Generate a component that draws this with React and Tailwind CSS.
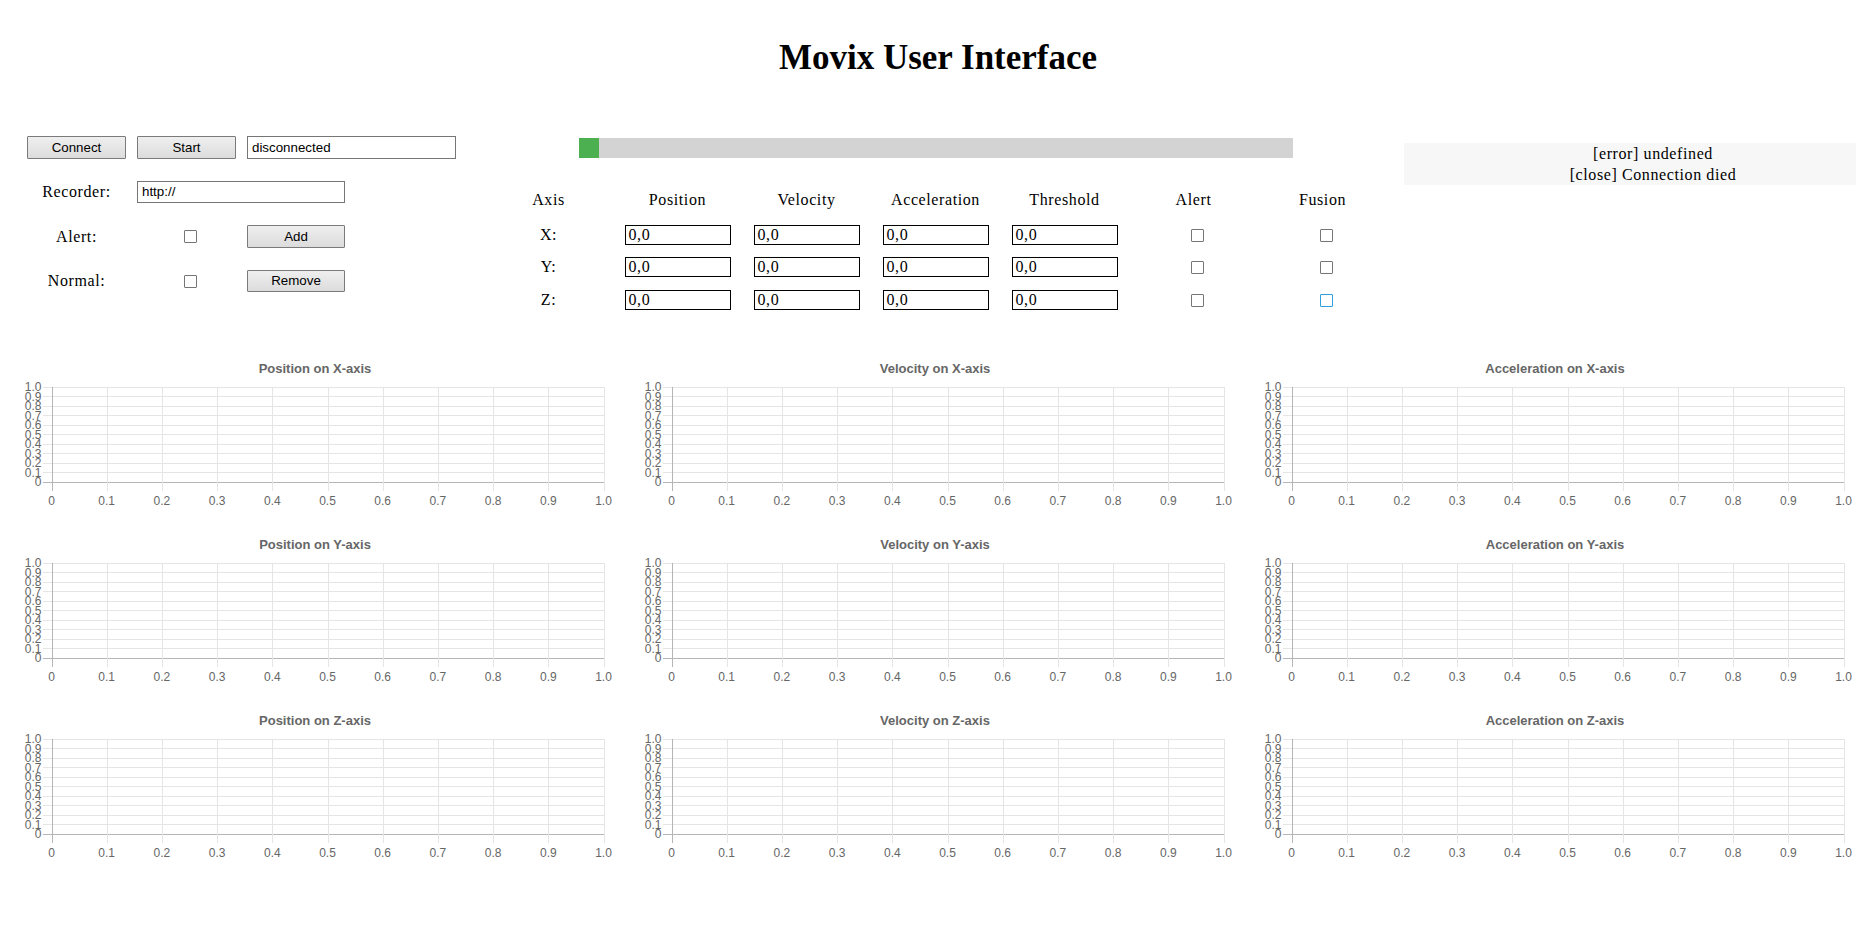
import React from "react";

const sans = "font-['Liberation_Sans',Arial,sans-serif]";

function Btn({ children, w }) {
  return (
    <button
      className={`${sans} ${w} h-full text-[13.33px] tracking-normal text-black border border-[#7a7a7a] rounded-[1px] bg-gradient-to-b from-[#efefef] to-[#dcdcdc] flex items-center justify-center leading-none`}
    >
      {children}
    </button>
  );
}

function Check({ blue }) {
  return (
    <div
      className={`w-[13px] h-[13px] rounded-[1px] bg-white border ${
        blue ? "border-[#2f9fe0]" : "border-[#767676]"
      }`}
    />
  );
}

function NumInput() {
  return (
    <div className="w-[106px] h-[20px] border border-black bg-white flex items-center pl-[3px] text-[16px] leading-none">
      0,0
    </div>
  );
}

function Chart({ title }) {
  const W = 620;
  const L = 43.5;
  const R = 595.5;
  const T = 34.5;
  const B = 129.5;
  const step = (B - T) / 10;
  const xs = Array.from({ length: 11 }, (_, i) => L + (i * (R - L)) / 10);
  const ys = Array.from({ length: 11 }, (_, j) => B - j * step);
  const xl = ["0", "0.1", "0.2", "0.3", "0.4", "0.5", "0.6", "0.7", "0.8", "0.9", "1.0"];
  return (
    <svg width={W} height={176} className="block">
      <text
        x={W / 2 - 3}
        y={20.5}
        textAnchor="middle"
        fontFamily="Liberation Sans, Arial, sans-serif"
        fontSize="13"
        fontWeight="bold"
        fill="#666"
      >
        {title}
      </text>
      <g shapeRendering="crispEdges">
        {ys.map((y, j) => (
          <line
            key={"h" + j}
            x1={L - 9}
            x2={R}
            y1={Math.round(y) + 0.5}
            y2={Math.round(y) + 0.5}
            stroke={j === 0 ? "#b5b5b5" : "#e5e5e5"}
            strokeWidth="1"
          />
        ))}
        {xs.map((x, i) => (
          <line
            key={"v" + i}
            x1={Math.round(x) + 0.5}
            x2={Math.round(x) + 0.5}
            y1={T}
            y2={B + 9}
            stroke={i === 0 ? "#b5b5b5" : "#e5e5e5"}
            strokeWidth="1"
          />
        ))}
      </g>
      {ys.map((y, j) => (
        <text
          key={"yl" + j}
          x={L - 10}
          y={y + 4.5}
          textAnchor="end"
          fontFamily="Liberation Sans, Arial, sans-serif"
          fontSize="12"
          fill="#666"
        >
          {j === 0 ? "0" : j === 10 ? "1.0" : "0." + j}
        </text>
      ))}
      {xs.map((x, i) => (
        <text
          key={"xl" + i}
          x={x}
          y={B + 23}
          textAnchor="middle"
          fontFamily="Liberation Sans, Arial, sans-serif"
          fontSize="12"
          fill="#666"
        >
          {xl[i]}
        </text>
      ))}
    </svg>
  );
}

export default function App() {
  const headers = ["Axis", "Position", "Velocity", "Acceleration", "Threshold", "Alert", "Fusion"];
  const rows = ["X:", "Y:", "Z:"];
  const charts = [
    ["Position on X-axis", "Velocity on X-axis", "Acceleration on X-axis"],
    ["Position on Y-axis", "Velocity on Y-axis", "Acceleration on Y-axis"],
    ["Position on Z-axis", "Velocity on Z-axis", "Acceleration on Z-axis"],
  ];
  return (
    <div className="min-h-screen w-full bg-white text-black font-['Liberation_Serif','Times_New_Roman',serif] text-[16px]">
      <h1 className="pt-[38px] text-center text-[35px] font-bold leading-[40px] m-0">
        Movix User Interface
      </h1>

      <div className="mt-[58px] h-[216px] flex items-start tracking-[0.6px]">
        {/* Left controls */}
        <div className="ml-[27px] w-[429px] flex flex-col">
          <div className="h-[23px] flex gap-[11px]">
            <Btn w="w-[99px]">Connect</Btn>
            <Btn w="w-[99px]">Start</Btn>
            <div
              className={`${sans} tracking-normal w-[209px] h-[23px] border border-[#767676] bg-white flex items-center pl-[4px] text-[13.33px]`}
            >
              disconnected
            </div>
          </div>
          <div className="mt-[22px] h-[22px] flex items-center">
            <div className="w-[99px] text-center">Recorder:</div>
            <div
              className={`${sans} tracking-normal ml-[11px] w-[208px] h-[22px] border border-[#767676] bg-white flex items-center pl-[4px] text-[13.33px]`}
            >
              http://
            </div>
          </div>
          <div className="mt-[22px] h-[23px] flex items-center">
            <div className="w-[99px] text-center">Alert:</div>
            <div className="ml-[11px] w-[99px] flex pl-[47px]">
              <Check />
            </div>
            <div className="ml-[11px] h-full">
              <Btn w="w-[98px]">Add</Btn>
            </div>
          </div>
          <div className="mt-[22px] h-[22px] flex items-center">
            <div className="w-[99px] text-center">Normal:</div>
            <div className="ml-[11px] w-[99px] flex pl-[47px]">
              <Check />
            </div>
            <div className="ml-[11px] h-full">
              <Btn w="w-[98px]">Remove</Btn>
            </div>
          </div>
        </div>

        {/* Middle */}
        <div className="ml-[28px] w-[903px] flex flex-col">
          <div className="ml-[95px] mt-[2px] h-[20px] w-[714px] bg-[#d3d3d3] flex">
            <div className="w-[20px] h-full bg-[#4caf50]" />
          </div>
          <div className="mt-[30px] h-[24px] grid grid-cols-[repeat(7,129px)] items-center">
            {headers.map((h) => (
              <div key={h} className="text-center">
                {h}
              </div>
            ))}
          </div>
          {rows.map((r, i) => (
            <div
              key={r}
              className={`${i === 0 ? "mt-[11px]" : i === 1 ? "mt-[12px]" : "mt-[13px]"} h-[20px] grid grid-cols-[repeat(7,129px)] items-center`}
            >
              <div className="text-center">{r}</div>
              {[0, 1, 2, 3].map((k) => (
                <div key={k} className="flex justify-center">
                  <NumInput />
                </div>
              ))}
              <div className="flex justify-center pl-[8px]">
                <Check />
              </div>
              <div className="flex justify-center pl-[8px]">
                <Check blue={i === 2} />
              </div>
            </div>
          ))}
        </div>

        {/* Log */}
        <div className="ml-[17px] mt-[7px] w-[452px] h-[42px] bg-[#f7f7f7] text-center leading-[21px] pl-[46px]">
          <div>[error] undefined</div>
          <div>[close] Connection died</div>
        </div>
      </div>

      <div className="px-[8px] flex flex-col">
        {charts.map((row, ri) => (
          <div key={ri} className="grid grid-cols-3">
            {row.map((t) => (
              <Chart key={t} title={t} />
            ))}
          </div>
        ))}
      </div>
    </div>
  );
}
